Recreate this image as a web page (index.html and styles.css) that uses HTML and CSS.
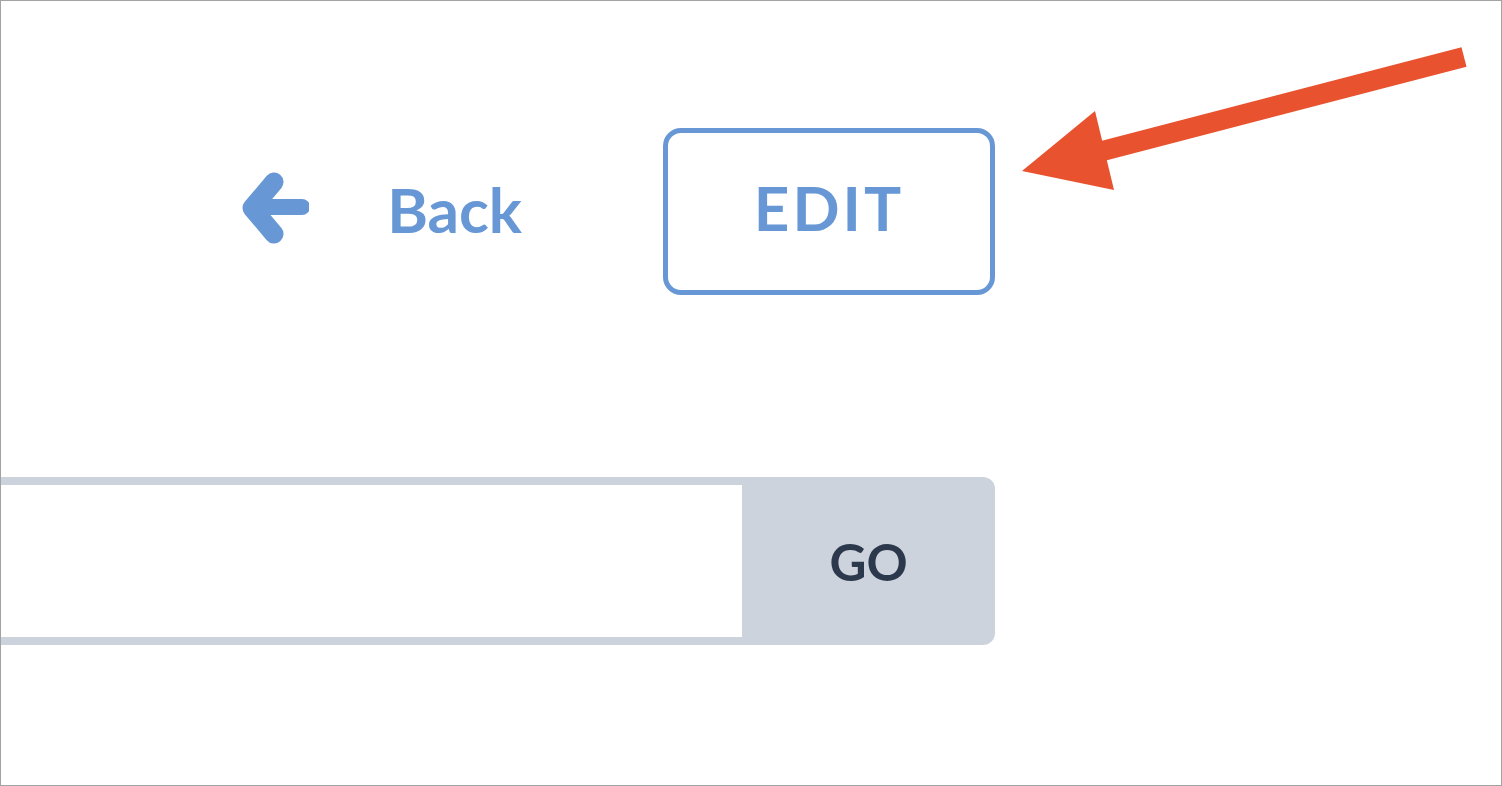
FILE: index.html
```html
<!DOCTYPE html>
<html lang="en">
<head>
    <meta charset="UTF-8">
    <title>Edit record</title>
    <link rel="stylesheet" href="styles.css">
</head>
<body>
    <div class="frame">
        <div class="panel">
            <div class="toolbar">
                <a class="back" href="#">
                    <svg class="back-icon" viewBox="0 0 68 72" width="68" height="72">
                        <path d="M33 10 L11 36 L33 62" fill="none" stroke="#6798d5" stroke-width="19" stroke-linejoin="round" stroke-linecap="round"/>
                        <path d="M16 35 H61" fill="none" stroke="#6798d5" stroke-width="16" stroke-linecap="round"/>
                    </svg>
                    <span class="back-label">Back</span>
                </a>
                <button class="edit-btn" type="button">EDIT</button>
            </div>

            <form class="search">
                <input class="search-input" type="text">
                <button class="go-btn" type="submit">GO</button>
            </form>
        </div>

        <!-- annotation arrow -->
        <svg class="callout" viewBox="0 0 1500 784" width="1500" height="784">
            <path d="M1463 56 L1090 153" stroke="#e8522f" stroke-width="20" stroke-linecap="butt" fill="none"/>
            <polygon points="1021,170 1094,110 1113,189" fill="#e8522f"/>
        </svg>
    </div>
</body>
</html>
```

FILE: styles.css
```css
body {
    margin: 0;
    background: white;
    font-family: Lato, 'Open Sans', sans-serif;
}
.frame {
    position: relative;
    width: 1502px;
    height: 786px;
    box-sizing: border-box;
    border: 1px solid #a3a3a3;
    overflow: hidden;
    background: white;
}
.panel {
    width: 994px;
    padding-top: 127px;
}
.toolbar {
    display: flex;
    justify-content: flex-end;
    align-items: center;
}
.back {
    display: flex;
    align-items: center;
    gap: 78px;
    margin-right: 141px;
    color: #6798d5;
    text-decoration: none;
    font-size: 62px;
    font-weight: 700;
}
.back-label {
    padding-bottom: 6px;
}
.back-icon {
    display: block;
    margin-top: -8px;
}
.edit-btn {
    width: 332px;
    height: 167px;
    box-sizing: border-box;
    border: 5px solid #6798d5;
    border-radius: 18px;
    background: white;
    color: #6798d5;
    font-family: Lato, 'Open Sans', sans-serif;
    font-size: 62px;
    font-weight: 700;
    letter-spacing: 3px;
    padding: 0 0 10px;
}
.search {
    display: flex;
    height: 168px;
    margin-top: 182px;
    margin-left: -60px;
}
.search-input {
    flex: 1;
    box-sizing: border-box;
    height: 100%;
    border: 8px solid #cdd3dd;
    border-right: 0;
    background: white;
    outline: none;
}
.go-btn {
    width: 253px;
    height: 100%;
    border: none;
    border-radius: 0 12px 12px 0;
    background: #cdd3dd;
    color: #2c384c;
    font-family: Lato, 'Open Sans', sans-serif;
    font-size: 51px;
    font-weight: 700;
    padding: 0;
}
.callout {
    position: absolute;
    left: 0;
    top: 0;
    pointer-events: none;
}
```
